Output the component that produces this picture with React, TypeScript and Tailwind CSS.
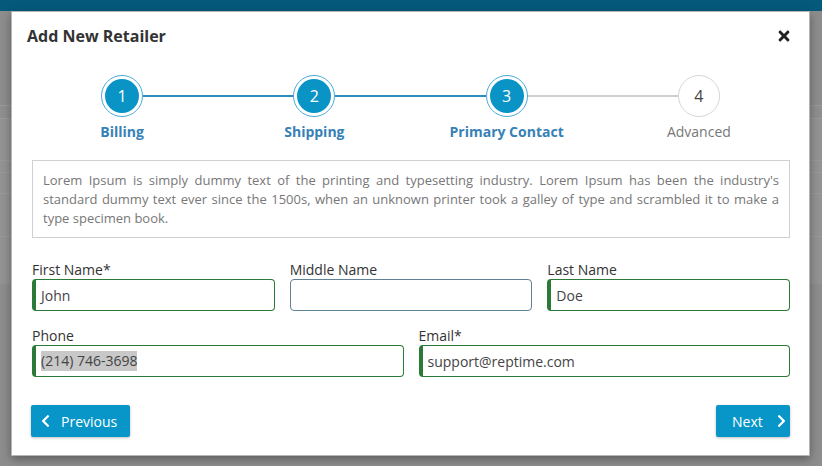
import React from "react";
import { FaChevronLeft, FaChevronRight, FaTimes } from "react-icons/fa";

const steps = [
  { n: 1, label: "Billing", done: true },
  { n: 2, label: "Shipping", done: true },
  { n: 3, label: "Primary Contact", done: true },
  { n: 4, label: "Advanced", done: false },
];

function Input({
  value,
  valid = true,
  selected = false,
}: {
  value: string;
  valid?: boolean;
  selected?: boolean;
}) {
  return (
    <div
      className={
        valid
          ? "h-[32px] rounded-[4px] border border-[#2b7a37] border-l-4 pl-[5px] flex items-center text-[14px] text-[#444]"
          : "h-[32px] rounded-[4px] border border-[#5f8296] pl-[8px] flex items-center text-[14px] text-[#444]"
      }
    >
      {selected ? <span className="bg-[#c8c8c8] leading-[20px]">{value}</span> : value}
    </div>
  );
}

function Field({ label, children }: { label: string; children: React.ReactNode }) {
  return (
    <div className="flex flex-col">
      <div className="text-[14px] leading-[18px] text-[#333]">{label}</div>
      {children}
    </div>
  );
}

export default function App() {
  return (
    <div
      className="relative w-[822px] h-[466px] overflow-hidden bg-[#8d8d8d]"
      style={{ fontFamily: '"Open Sans", "Noto Sans", sans-serif' }}
    >
      {/* background page */}
      <div className="h-[11px] bg-[#045a7b]" />
      <div className="h-[94px]" />
      <div className="h-[13px] border-t border-[#9a9a9a] bg-[#8f8f8f]" />
      <div className="h-[166px] bg-[#939393] border-t border-[#9a9a9a]">
        <div className="h-[42px] border-b border-[#9a9a9a]" />
        <div className="h-[12px] border-b border-[#9a9a9a]" />
        <div className="h-[21px] border-b border-[#9a9a9a]" />
        <div className="h-[43px] border-b border-[#9a9a9a]" />
      </div>

      {/* modal */}
      <div className="absolute left-[11px] top-[11px] w-[799px] h-[445px] bg-white border border-[#b5b5b5] shadow-[0_3px_9px_rgba(0,0,0,0.35)]">
        <div className="flex items-center justify-between pl-[15px] pr-[18px] pt-[12px]">
          <div className="text-[16px] leading-[24px] font-bold text-[#333]">Add New Retailer</div>
          <FaTimes className="text-[#222] w-[14px] h-[16px]" />
        </div>

        <div className="mx-[14px] mt-[27px] grid grid-cols-4">
          {steps.map((s, i) => (
            <div key={s.n} className="relative flex flex-col items-center">
              {i < steps.length - 1 && (
                <div
                  className={
                    steps[i + 1].done
                      ? "absolute left-1/2 w-full top-[20px] h-[2px] bg-[#2f8cc3]"
                      : "absolute left-1/2 w-full top-[20px] h-[2px] bg-[#cfcfcf]"
                  }
                />
              )}
              {s.done ? (
                <div className="relative z-10 w-[42px] h-[42px] rounded-full border border-[#4aabd8] bg-white p-[3px]">
                  <div className="w-full h-full rounded-full bg-[#0a93c5] flex items-center justify-center text-white text-[16px]">
                    {s.n}
                  </div>
                </div>
              ) : (
                <div className="relative z-10 w-[42px] h-[42px] rounded-full border border-[#d6d6d6] bg-white flex items-center justify-center text-[#444] text-[16px]">
                  {s.n}
                </div>
              )}
              <div
                className={
                  s.done
                    ? "mt-[5px] text-[14px] leading-[20px] font-bold text-[#3781b7]"
                    : "mt-[5px] text-[14px] leading-[20px] text-[#777]"
                }
              >
                {s.label}
              </div>
            </div>
          ))}
        </div>

        <div className="ml-[20px] mr-[19px] mt-[18px] h-[78px] border border-[#d0d0d0] px-[10px] pt-[10px] text-[13px] leading-[19px] text-[#777] text-justify">
          Lorem Ipsum is simply dummy text of the printing and typesetting industry. Lorem Ipsum has been the
          industry's standard dummy text ever since the 1500s, when an unknown printer took a galley of type and
          scrambled it to make a type specimen book.
        </div>

        <div className="ml-[20px] mr-[19px] mt-[23px] grid grid-cols-3 gap-x-[15px]">
          <Field label="First Name*">
            <Input value="John" />
          </Field>
          <Field label="Middle Name">
            <Input value="" valid={false} />
          </Field>
          <Field label="Last Name">
            <Input value="Doe" />
          </Field>
        </div>

        <div className="ml-[20px] mr-[19px] mt-[16px] grid grid-cols-2 gap-x-[15px]">
          <Field label="Phone">
            <Input value="(214) 746-3698" selected />
          </Field>
          <Field label="Email*">
            <Input value="support@reptime.com" />
          </Field>
        </div>

        <div className="ml-[19px] mr-[19px] mt-[28px] flex justify-between">
          <button className="h-[32px] w-[99px] rounded-[2px] bg-[#0896c8] text-white text-[14px] flex items-center pl-[9px] gap-[10px] shadow-[0_1px_3px_rgba(0,0,0,0.25)]">
            <FaChevronLeft className="w-[11px] h-[14px]" />
            <span>Previous</span>
          </button>
          <button className="h-[32px] w-[74px] rounded-[2px] bg-[#0896c8] text-white text-[14px] flex items-center pl-[16px] gap-[13px] shadow-[0_1px_3px_rgba(0,0,0,0.25)]">
            <span>Next</span>
            <FaChevronRight className="w-[11px] h-[14px]" />
          </button>
        </div>
      </div>
    </div>
  );
}
